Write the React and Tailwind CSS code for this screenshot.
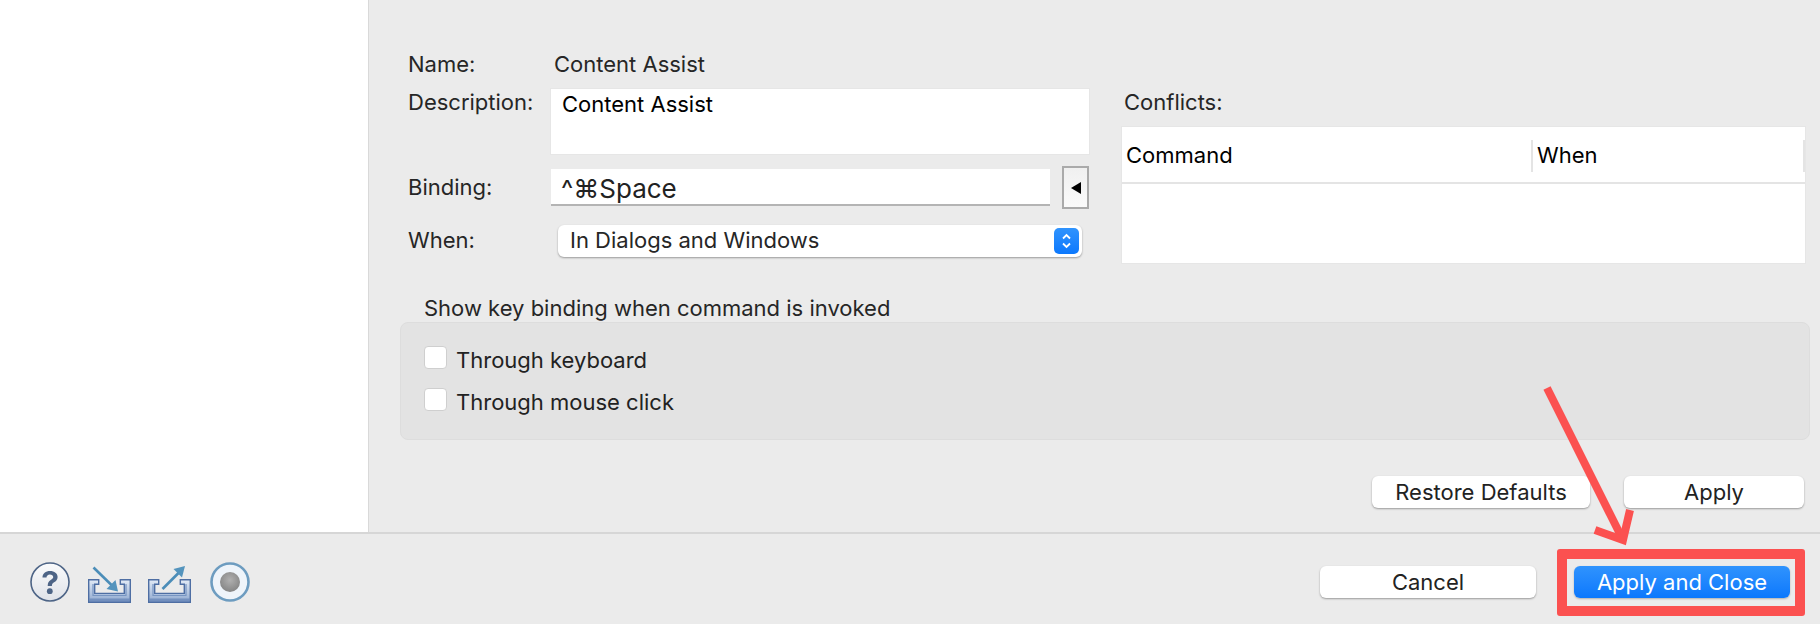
import React from "react";

const font = "font-['Inter','Liberation_Sans',sans-serif]";

function HelpIcon() {
  return (
    <svg width="42" height="42" viewBox="0 0 42 42">
      <defs>
        <linearGradient id="helpBg" x1="0" y1="0" x2="0" y2="1">
          <stop offset="0" stopColor="#fafbfc" />
          <stop offset="1" stopColor="#dfe2e8" />
        </linearGradient>
      </defs>
      <circle cx="21" cy="21" r="19" fill="url(#helpBg)" stroke="#4d6486" strokeWidth="1.6" />
      <path d="M13.5 16.5c0-4.2 3.2-6.6 7.5-6.6 4.4 0 7.6 2.4 7.6 6 0 2.7-1.6 4.1-3.5 5.4-1.6 1.1-2.2 1.8-2.2 3.6h-4.2c0-3 1-4.4 3-5.8 1.6-1.1 2.5-1.8 2.5-3.1 0-1.6-1.4-2.6-3.3-2.6-2.1 0-3.3 1.3-3.4 3.1z" fill="#4d6486" />
      <circle cx="20.8" cy="30.2" r="2.9" fill="#4d6486" />
    </svg>
  );
}

function TrayIcon({ id, arrow }) {
  return (
    <svg className="blur-[0.4px]" width="43" height="42" viewBox="0 0 43 42">
      <defs>
        <linearGradient id={id} x1="0" y1="0" x2="0" y2="1">
          <stop offset="0" stopColor="#e3ebf6" />
          <stop offset="1" stopColor="#8ea8cf" />
        </linearGradient>
      </defs>
      <path d="M.7 18.7h10v4.5H6.7v9.2h29.6v-9.2h-4v-4.5h10v22.6H.7z" fill={`url(#${id})`} stroke="#4e6ea3" strokeWidth="1.4" />
      <path d="M5 23v11.5h33V23" fill="none" stroke="#7795c2" strokeWidth="1.2" />
      <path d="M1.5 37.5h40v3.2h-40z" fill="#5c7cb0" opacity=".6" />
      {arrow === "in" ? (
        <>
          <path d="M5.5 6.5 24 24.5" stroke="#4b8db8" strokeWidth="2.6" fill="none" />
          <path d="M30 30.5 27.5 19 18.5 28z" fill="#5494bd" />
        </>
      ) : (
        <>
          <path d="M14.5 28 32 10.5" stroke="#4b8db8" strokeWidth="2.6" fill="none" />
          <path d="M37 5 25.5 8 34 16.5z" fill="#5494bd" />
        </>
      )}
    </svg>
  );
}

function RecordIcon() {
  return (
    <svg className="blur-[0.5px]" width="42" height="42" viewBox="0 0 42 42">
      <defs>
        <radialGradient id="recDot" cx="0.5" cy="0.4" r="0.6">
          <stop offset="0" stopColor="#b0b0b0" />
          <stop offset="1" stopColor="#858585" />
        </radialGradient>
      </defs>
      <circle cx="21" cy="21" r="18.5" fill="#eef4fa" stroke="#6d9cc0" strokeWidth="2.6" />
      <circle cx="21" cy="21" r="10" fill="url(#recDot)" />
    </svg>
  );
}

function MacButton({ children, className }) {
  return (
    <button className={`h-8 rounded-[6px] bg-white text-[22px] text-[#222] shadow-[0_1px_2px_rgba(0,0,0,0.35)] ${className}`}>
      {children}
    </button>
  );
}

function Checkbox({ label }) {
  return (
    <label className="flex h-[23px] items-center">
      <span className="h-[23px] w-[23px] rounded-[4px] border border-[#cfcfcf] bg-white" />
      <span className="ml-[9px] pt-[5px] text-[22px] text-[#222]">{label}</span>
    </label>
  );
}

export default function App() {
  return (
    <div className={`relative flex h-[624px] w-[1820px] flex-col overflow-hidden bg-[#ebebeb] ${font}`}>
      <div className="flex h-[532px]">
        <div className="w-[369px] shrink-0 border-r border-[#d9d9d9] bg-white" />

        <div className="flex-1 pl-[31px] pr-[10px] pt-[51px]">
          <div className="flex">
            <div className="ml-[8px] w-[681px]">
              <div className="flex h-[26px] items-center text-[22px] text-[#262626]">
                <span className="w-[146px]">Name:</span>
                <span>Content Assist</span>
              </div>

              <div className="mt-[12px] flex">
                <span className="w-[143px] text-[22px] leading-[26px] text-[#262626]">Description:</span>
                <div className="h-[65px] w-[538px] bg-white pl-[11px] pt-[2px] text-[22px] leading-[26px] text-black shadow-[0_0_0_1px_#e6e6e6]">
                  Content Assist
                </div>
              </div>

              <div className="mt-[12px] flex items-center">
                <span className="w-[143px] text-[22px] text-[#262626]">Binding:</span>
                <div className="flex h-[37px] w-[499px] items-center border-b-2 border-[#b4b4b4] bg-white pl-[10px] pt-[3px] text-[26px] text-[#222]">
                  ^⌘Space
                </div>
                <button className="ml-[12px] flex h-[43px] w-[27px] items-center justify-center border-2 border-[#aaaaaa] bg-gradient-to-b from-[#f0f0f0] to-[#fafafa]">
                  <svg width="10" height="12" viewBox="0 0 10 12">
                    <path d="M10 0v12L0 6z" fill="#000" />
                  </svg>
                </button>
              </div>

              <div className="mt-[15px] flex items-center">
                <span className="w-[150px] text-[22px] text-[#262626]">When:</span>
                <div className="flex h-[32px] w-[524px] items-center justify-between rounded-[6px] bg-white pl-[12px] pr-[3px] text-[22px] text-[#262626] shadow-[0_1px_2px_rgba(0,0,0,0.35)]">
                  <span>In Dialogs and Windows</span>
                  <span className="flex h-[26px] w-[25px] items-center justify-center rounded-[5px] bg-gradient-to-b from-[#2f93fd] to-[#0a78fd]">
                    <svg width="13" height="20" viewBox="0 0 13 20" fill="none" stroke="#fff" strokeWidth="1.8">
                      <path d="M3 7.5 6.5 4 10 7.5M3 12.5 6.5 16l3.5-3.5" />
                    </svg>
                  </span>
                </div>
              </div>
            </div>

            <div className="ml-[33px] pt-[38px]">
              <div className="h-[26px] pl-[2px] text-[22px] leading-[26px] text-[#262626]">Conflicts:</div>
              <div className="mt-[12px] h-[136px] w-[683px] bg-white shadow-[0_0_0_1px_#e6e6e6]">
                <div className="flex h-[57px] items-center border-b-2 border-[#e4e4e4] pt-[2px] text-[22px] text-black">
                  <span className="w-[409px] pl-[4px]">Command</span>
                  <span className="h-[32px] w-[2px] bg-[#e4e4e4]" />
                  <span className="flex h-[32px] flex-1 items-center pl-[4px]">When</span>
                  <span className="h-[32px] w-[2px] bg-[#e4e4e4]" />
                </div>
              </div>
            </div>
          </div>

          <div className="mt-[32px] h-[26px] pl-[24px] text-[22px] leading-[26px] text-[#262626]">
            Show key binding when command is invoked
          </div>
          <div className="mt-[1px] flex h-[118px] flex-col gap-[19px] rounded-[8px] border border-[#dddddd] bg-[#e3e3e3] pl-[23px] pt-[23px]">
            <Checkbox label="Through keyboard" />
            <Checkbox label="Through mouse click" />
          </div>

          <div className="mr-[6px] mt-[36px] flex justify-end gap-[34px]">
            <MacButton className="w-[218px]">Restore Defaults</MacButton>
            <MacButton className="w-[180px]">Apply</MacButton>
          </div>
        </div>
      </div>

      {/* Footer */}
      <div className="flex flex-1 items-center justify-between border-t-2 border-[#d6d6d6] pl-[29px] pr-[30px] pt-[6px]">
        <div className="flex items-center">
          <HelpIcon />
          <div className="ml-[17px]"><TrayIcon id="trayIn" arrow="in" /></div>
          <div className="ml-[17px]"><TrayIcon id="trayOut" arrow="out" /></div>
          <div className="ml-[18px]"><RecordIcon /></div>
        </div>
        <div className="flex gap-[38px]">
          <MacButton className="w-[216px]">Cancel</MacButton>
          <button className="h-8 w-[216px] rounded-[6px] bg-gradient-to-b from-[#2f93fd] to-[#0a78fd] text-[22px] text-white shadow-[0_1px_2px_rgba(0,0,0,0.25)]">
            Apply and Close
          </button>
        </div>
      </div>

      {/* red annotation drawn over the screenshot */}
      <div className="absolute left-[1557px] top-[549px] h-[67px] w-[248px] rounded-[3px] border-[10px] border-[#fb5150]" />
      <svg className="absolute left-[1530px] top-[380px]" width="120" height="175" viewBox="0 0 120 175" fill="none" stroke="#fb5150" strokeWidth="8">
        <path d="M17 8 92 158" />
        <path d="M65 150l28 10 7-30" />
      </svg>
    </div>
  );
}
